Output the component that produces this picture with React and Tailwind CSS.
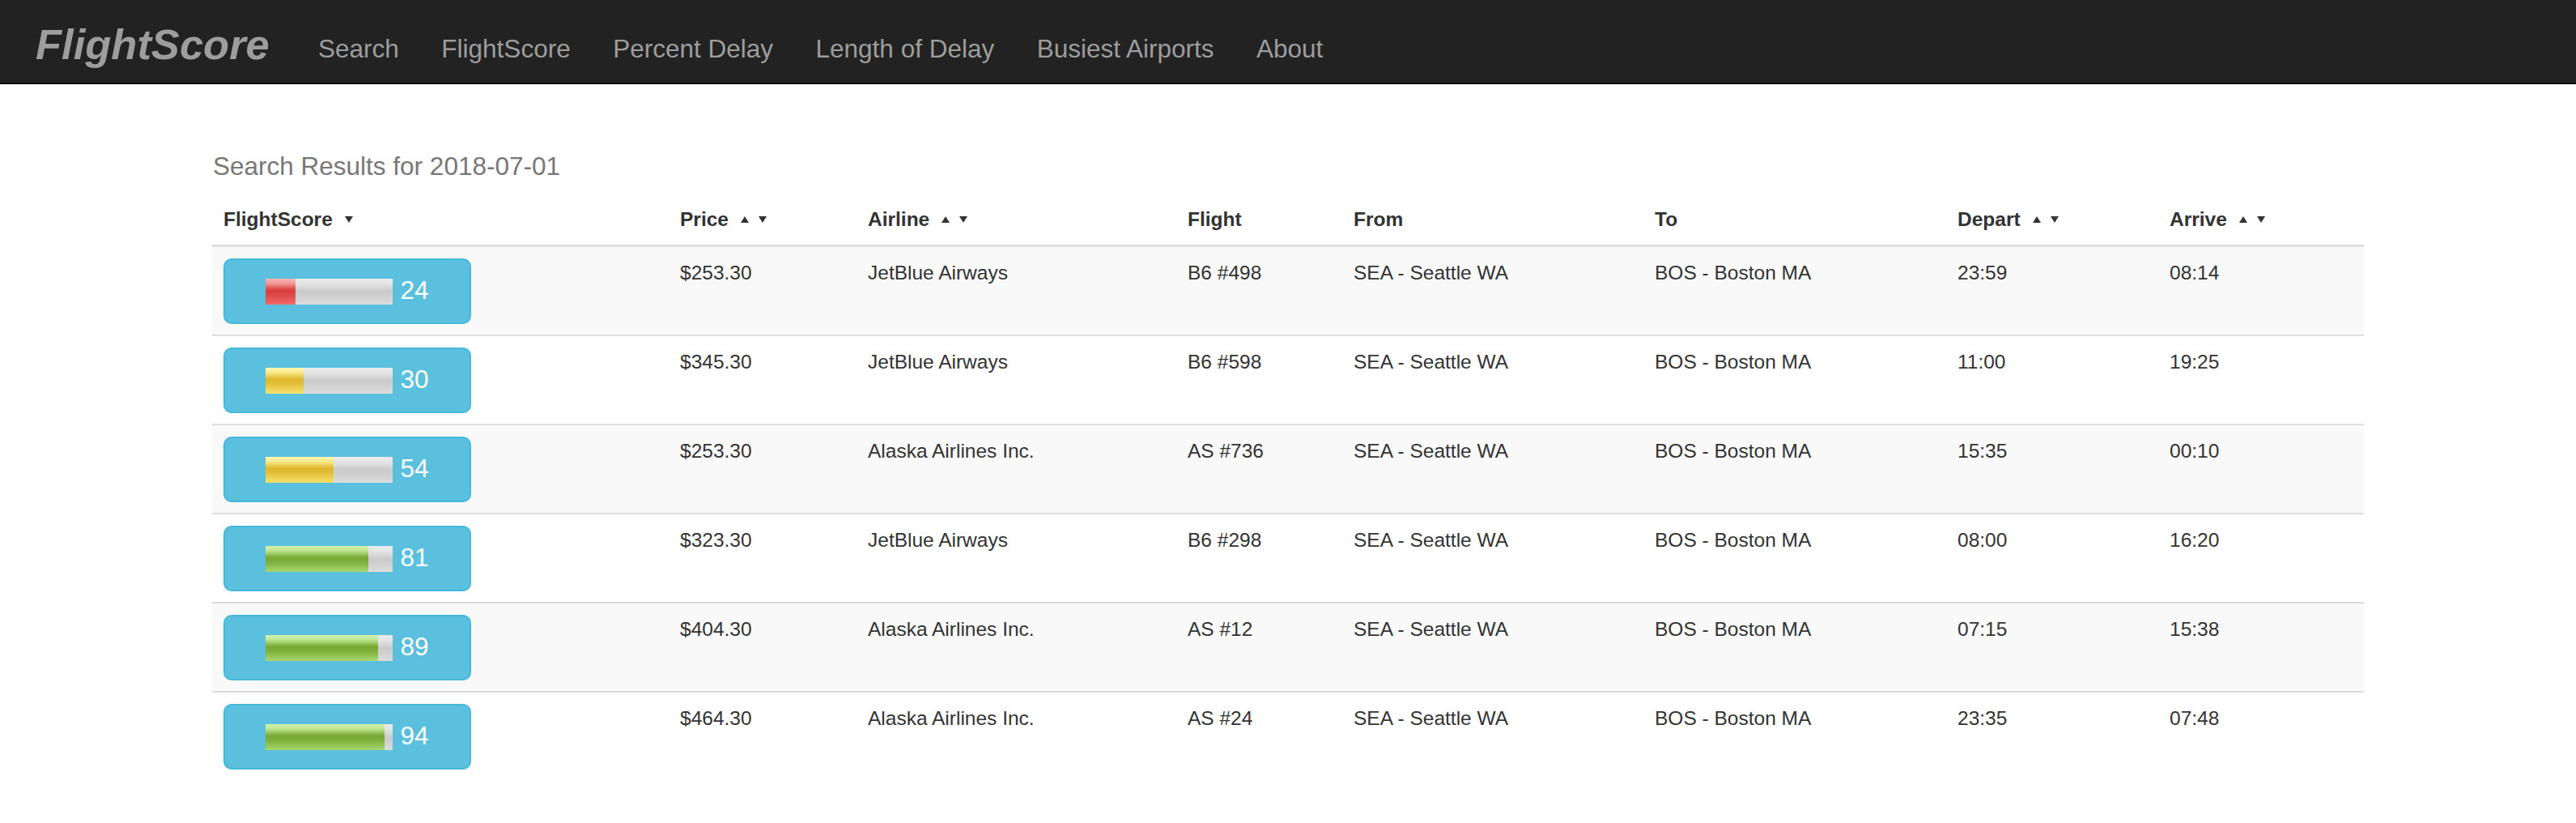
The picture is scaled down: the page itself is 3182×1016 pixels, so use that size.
const flights = [
  { score: 24, price: "$253.30", airline: "JetBlue Airways", flight: "B6 #498", depart: "23:59", arrive: "08:14" },
  { score: 30, price: "$345.30", airline: "JetBlue Airways", flight: "B6 #598", depart: "11:00", arrive: "19:25" },
  { score: 54, price: "$253.30", airline: "Alaska Airlines Inc.", flight: "AS #736", depart: "15:35", arrive: "00:10" },
  { score: 81, price: "$323.30", airline: "JetBlue Airways", flight: "B6 #298", depart: "08:00", arrive: "16:20" },
  { score: 89, price: "$404.30", airline: "Alaska Airlines Inc.", flight: "AS #12", depart: "07:15", arrive: "15:38" },
  { score: 94, price: "$464.30", airline: "Alaska Airlines Inc.", flight: "AS #24", depart: "23:35", arrive: "07:48" },
];

const navLinks = ["Search", "FlightScore", "Percent Delay", "Length of Delay", "Busiest Airports", "About"];

const cols = "grid grid-cols-[564px_232px_395px_205px_372px_374px_262px_253px]";

function Up() {
  return (
    <svg width="10" height="8" viewBox="0 0 10 8" className="block">
      <path d="M5 0 L10 8 L0 8 Z" fill="#333" />
    </svg>
  );
}

function Down() {
  return (
    <svg width="10" height="8" viewBox="0 0 10 8" className="block">
      <path d="M0 0 L10 0 L5 8 Z" fill="#333" />
    </svg>
  );
}

function Header({ label, up, down }) {
  return (
    <div className="px-[14px] py-[14px] leading-[35px] font-bold flex items-center">
      <span>{label}</span>
      {(up || down) && (
        <span className="flex items-center gap-[12px] ml-[15px] -mb-[1px]">
          {up && <Up />}
          {down && <Down />}
        </span>
      )}
    </div>
  );
}

function fillClass(score) {
  if (score < 30) return "bg-[linear-gradient(to_bottom,#fbb5b5_0%,#f29a9a_18%,#d83c3c_45%,#dd4545_60%,#f06a6a_100%)]";
  if (score < 60) return "bg-[linear-gradient(to_bottom,#fff9b0_0%,#fbe98a_18%,#dfb72c_45%,#e2bd36_60%,#f7e26e_100%)]";
  return "bg-[linear-gradient(to_bottom,#d3f3ad_0%,#bfe48f_18%,#76a932_45%,#7cad38_60%,#a9d871_100%)]";
}

function ScoreButton({ score }) {
  return (
    <div className="w-[306px] h-[81px] rounded-[10px] bg-[#5bc0de] border-2 border-[#46b8da] flex items-center justify-center">
      <div className="w-[157px] h-[32px] bg-[linear-gradient(to_bottom,#ececec_0%,#e4e4e4_20%,#cbcbcb_50%,#d2d2d2_75%,#dcdcdc_100%)] flex">
        <div className={`h-full ${fillClass(score)}`} style={{ width: `${score}%` }} />
      </div>
      <span className="ml-[10px] text-white text-[31.5px] leading-[36px] mb-[3px] w-[36px]">{score}</span>
    </div>
  );
}

export default function App() {
  return (
    <div className="min-h-screen bg-white font-['Liberation_Sans','Arial',sans-serif] text-[#333]">
      <nav className="h-[104px] bg-[#222] border-b-2 border-[#080808] flex items-start pl-[44px]">
        <a className="mt-[25px] text-[52.5px] leading-[60px] font-bold italic text-[#9d9d9d] mr-[34px]">FlightScore</a>
        <ul className="flex mt-[42px]">
          {navLinks.map((l) => (
            <li key={l} className="px-[26.25px] text-[31.5px] leading-[36px] text-[#9d9d9d]">{l}</li>
          ))}
        </ul>
      </nav>

      <main className="w-[2658px] mx-auto">
        <h4 className="mt-[84px] text-[31.5px] leading-[35px] text-[#777] pl-[1px]">Search Results for 2018-07-01</h4>

        <div className="mt-[16px] text-[24.5px]">
          <div className={`${cols} border-b-[3px] border-[#ddd]`}>
            <Header label="FlightScore" down />
            <Header label="Price" up down />
            <Header label="Airline" up down />
            <Header label="Flight" />
            <Header label="From" />
            <Header label="To" />
            <Header label="Depart" up down />
            <Header label="Arrive" up down />
          </div>

          {flights.map((f, i) => (
            <div
              key={i}
              className={`${cols} ${i > 0 ? "border-t-2 border-[#ddd]" : ""} ${i % 2 === 0 ? "bg-[#f9f9f9]" : "bg-white"}`}
            >
              <div className="px-[14px] pt-[14px] pb-[13px]">
                <ScoreButton score={f.score} />
              </div>
              <div className="px-[14px] pt-[14px] leading-[35px]">{f.price}</div>
              <div className="px-[14px] pt-[14px] leading-[35px]">{f.airline}</div>
              <div className="px-[14px] pt-[14px] leading-[35px]">{f.flight}</div>
              <div className="px-[14px] pt-[14px] leading-[35px]">SEA - Seattle WA</div>
              <div className="px-[14px] pt-[14px] leading-[35px]">BOS - Boston MA</div>
              <div className="px-[14px] pt-[14px] leading-[35px]">{f.depart}</div>
              <div className="px-[14px] pt-[14px] leading-[35px]">{f.arrive}</div>
            </div>
          ))}
        </div>
      </main>
    </div>
  );
}
